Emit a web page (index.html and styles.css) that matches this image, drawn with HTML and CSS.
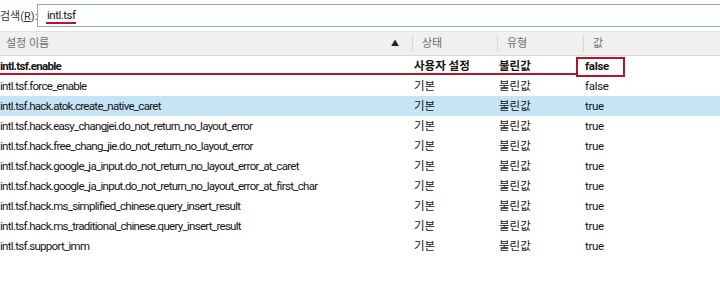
FILE: index.html
```html
<!DOCTYPE html>
<html lang="ko">
<head>
    <meta charset="UTF-8">
    <title>about:config</title>
    <link rel="stylesheet" href="styles.css">
</head>
<body>
    <div class="page">
        <div class="search">
            <label class="search-label">검색(<u>R</u>):</label>
            <div class="search-box"><span class="query">intl.tsf</span></div>
        </div>

        <div class="prefs">
            <div class="head">
                <div class="hcell name">설정 이름 <span class="sort">&#9650;</span></div>
                <div class="hcell">상태</div>
                <div class="hcell">유형</div>
                <div class="hcell">값</div>
            </div>

            <div class="row modified">
                <div>intl.tsf.enable</div><div>사용자 설정</div><div>불린값</div><div>false</div>
            </div>
            <div class="row">
                <div>intl.tsf.force_enable</div><div>기본</div><div>불린값</div><div>false</div>
            </div>
            <div class="row selected">
                <div>intl.tsf.hack.atok.create_native_caret</div><div>기본</div><div>불린값</div><div>true</div>
            </div>
            <div class="row">
                <div>intl.tsf.hack.easy_changjei.do_not_return_no_layout_error</div><div>기본</div><div>불린값</div><div>true</div>
            </div>
            <div class="row">
                <div>intl.tsf.hack.free_chang_jie.do_not_return_no_layout_error</div><div>기본</div><div>불린값</div><div>true</div>
            </div>
            <div class="row">
                <div>intl.tsf.hack.google_ja_input.do_not_return_no_layout_error_at_caret</div><div>기본</div><div>불린값</div><div>true</div>
            </div>
            <div class="row">
                <div>intl.tsf.hack.google_ja_input.do_not_return_no_layout_error_at_first_char</div><div>기본</div><div>불린값</div><div>true</div>
            </div>
            <div class="row">
                <div>intl.tsf.hack.ms_simplified_chinese.query_insert_result</div><div>기본</div><div>불린값</div><div>true</div>
            </div>
            <div class="row">
                <div>intl.tsf.hack.ms_traditional_chinese.query_insert_result</div><div>기본</div><div>불린값</div><div>true</div>
            </div>
            <div class="row">
                <div>intl.tsf.support_imm</div><div>기본</div><div>불린값</div><div>true</div>
            </div>
        </div>

        <!-- 빨간 표시 -->
        <div class="mark-query"></div>
        <div class="mark-line"></div>
        <div class="mark-box"></div>
    </div>
</body>
</html>
```

FILE: styles.css
```css
body {
    margin: 0;
    background: #ffffff;
    font-family: Roboto, "Noto Sans CJK KR", sans-serif;
    font-size: 11.5px;
    color: #141414;
}

.page {
    position: relative;
    width: 720px;
    height: 294px;
    overflow: hidden;
}

/* 검색창 */
.search {
    display: flex;
    align-items: center;
    height: 28px;
    padding-top: 1px;
}

.search-label {
    width: 37px;
    color: #333333;
    white-space: nowrap;
    font-size: 11px;
}

.search-box {
    flex: 1;
    height: 21px;
    border: 1px solid #86aab6;
    border-right: none;
    display: flex;
    align-items: center;
    padding-left: 9px;
    letter-spacing: -0.5px;
}

/* 목록 */
.prefs {
    margin-top: 2px;
}

.head,
.row {
    display: grid;
    grid-template-columns: 412px 85px 86px 1fr;
}

.head {
    height: 23px;
    background: #f0f0f0;
    border-top: 1px solid #e2e2e2;
    border-bottom: 1px solid #d9d9d9;
    color: #6d6d6d;
    align-items: center;
    font-size: 11px;
}

.hcell {
    padding-left: 9px;
    border-left: 1px solid #d6d6d6;
    height: 17px;
    line-height: 17px;
}

.hcell.name {
    border-left: none;
    padding-left: 6px;
    position: relative;
}

.sort {
    position: absolute;
    right: 13px;
    top: 0;
    font-size: 8px;
    color: #222222;
}

.row {
    height: 20px;
    line-height: 20px;
    white-space: nowrap;
}

.row div {
    padding-left: 2px;
}

.row div:first-child {
    padding-left: 0;
    letter-spacing: -0.7px;
}

.row div:last-child {
    letter-spacing: -0.3px;
}

.row.modified {
    font-weight: bold;
    height: 19px;
    line-height: 19px;
    margin-top: 1px;
}

.row.selected {
    background: #c5e4f6;
}

/* 빨간 표시 */
.mark-query {
    position: absolute;
    left: 46px;
    top: 22px;
    width: 30px;
    height: 2px;
    background: #b3162a;
}

.mark-line {
    position: absolute;
    left: 0;
    top: 73px;
    width: 577px;
    height: 2px;
    background: #b3162a;
}

.mark-box {
    position: absolute;
    left: 576px;
    top: 57px;
    width: 45px;
    height: 16px;
    border: 2px solid #b3162a;
}
```
